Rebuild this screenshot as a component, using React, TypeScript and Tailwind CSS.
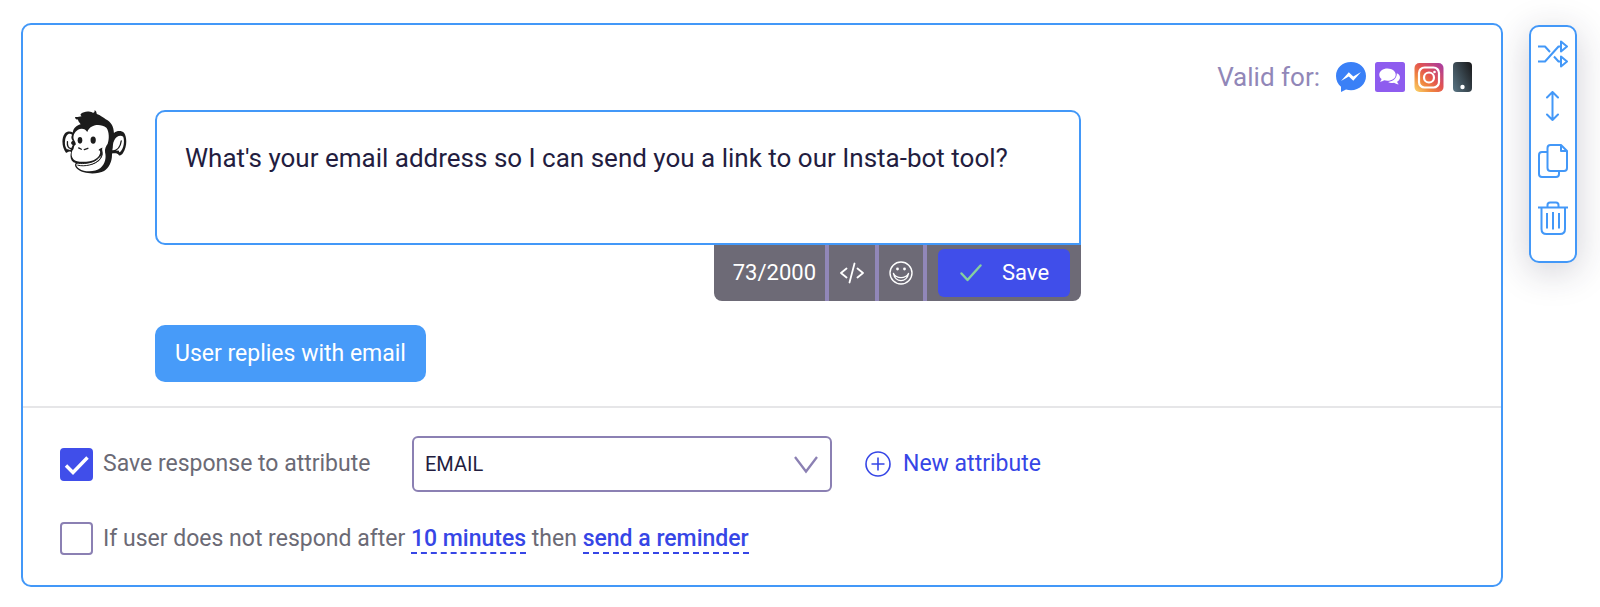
import React, { useState } from "react";

const Monkey = () => (
  <svg viewBox="36 30 196 194" className="w-[65px] h-16 shrink-0" aria-hidden="true">
    {/* Hair, head and ears */}
    <path
      fill="#1c1c1c"
      d="M75 51C82 53 88 49 95 49C91 47 91 43 93 41C102 36 112 31 129 38C133 39 135 36 134 31C139 32 140 37 141 42C152 46 160 52 168 58C184 66 192 78 193 100C203 92 216 92 224 100C233 114 233 142 220 161C216 166 212 169 208 167C204 160 196 160 187 162C188 186 178 205 163 215C142 226 100 225 82 209C75 203 73 196 77 191C64 187 58 176 63 157C55 153 52 159 48 160C36 147 32 116 44 101C51 93 62 94 68 98C70 85 79 77 92 73C89 68 84 65 84 59C78 59 75 56 75 51Z"
    />
    {/* Face */}
    <path
      fill="#fff"
      d="M112 97C107 86 93 84 84 90C73 97 67 110 72 121C75 127 78 131 77 135C69 138 74 146 67 153C63 162 64 173 70 179C78 188 100 189 120 185C136 182 148 173 151 160C152 155 150 151 146 152C148 147 155 147 158 144C155 151 160 157 159 165C155 182 140 193 120 197C106 200 90 198 81 193C77 195 79 202 88 208C104 219 135 219 152 206C167 193 170 173 166 158C165 147 168 141 174 132C179 119 179 95 170 84C158 74 139 74 128 79C119 83 115 89 112 97Z"
    />
    {/* Lips */}
    <path
      d="M82 197C104 203 137 196 151 178C154 174 155 170 155 163C146 182 128 190 104 192C95 193 86 192 81 191"
      fill="#fff"
      stroke="#1c1c1c"
      strokeWidth="3"
    />
    {/* Inner ears */}
    <path
      fill="#fff"
      d="M66 105C56 97 47 107 45 121C43 133 45 142 50 149C53 148 55 151 61 151C63 146 66 142 68 136C61 132 62 126 68 123C63 117 63 111 66 105Z"
    />
    <path d="M52 126C51 136 54 146 63 147" fill="none" stroke="#1c1c1c" strokeWidth="4" strokeLinecap="round" />
    <path
      fill="#fff"
      d="M221 111C213 103 198 111 194 122C188 132 191 143 188 152C195 153 199 155 205 153C209 151 207 157 211 158C223 147 226 124 221 111Z"
    />
    <path d="M215 124C213 139 204 152 190 155" fill="none" stroke="#1c1c1c" strokeWidth="4" strokeLinecap="round" />
    {/* Eyes and nose */}
    <ellipse cx="90" cy="122" rx="7" ry="10" fill="#1c1c1c" />
    <ellipse cx="130" cy="121" rx="8" ry="11" fill="#1c1c1c" />
    <path d="M86 145L94 149M103 150L114 146" stroke="#1c1c1c" strokeWidth="4" strokeLinecap="round" />
  </svg>
);

const MessengerIcon = () => (
  <svg viewBox="0 0 30 30" className="w-[30px] h-[30px]" role="img" aria-label="Messenger">
    <path fill="#3a80f7" d="M15 0C6.500 0 0 6 0 14c0 4.500 2 8.300 5 10.800V30l5-2.500c1.600.5 3.300.7 5 .7 8.500 0 15-6.200 15-14.200S23.500 0 15 0Z" />
    <path fill="#fff" d="M5 19l7.800-8.700 4.500 4.100L25 10l-7.700 8.700-4.500-4.100Z" />
  </svg>
);

const ChatIcon = () => (
  <svg viewBox="0 0 30 30" className="w-[30px] h-[30px]" role="img" aria-label="Web chat">
    <rect width="30" height="30" rx="2.500" fill="#8e5cef" />
    <path fill="#fff" d="M12.500 6.500c-4.600 0-8.200 2.700-8.200 6.200 0 1.800.9 3.300 2.300 4.400-.3 1.100-1 1.900-1.700 2.600 1.700 0 3.100-.6 4.300-1.400 1 .3 2.100.5 3.300.5 4.600 0 8.200-2.700 8.200-6.100s-3.600-6.200-8.200-6.200Z" />
    <path fill="#fff" d="M21.800 11.200c.2 4.700-3.600 8.200-8.600 8.700 1.300.9 3.500 1.400 5.800.9 1.200.9 2.700 1.500 4.800 1.500-.8-.8-1.400-1.600-1.700-2.600 3.700-2 4.100-6.600-.3-8.500Z" />
  </svg>
);

const InstagramIcon = () => (
  <svg viewBox="0 0 30 30" className="w-[30px] h-[30px]" role="img" aria-label="Instagram">
    <defs>
      <linearGradient id="insta" x1="0" y1="1" x2="1" y2="0">
        <stop offset="0" stopColor="#fbd96c" />
        <stop offset="0.300" stopColor="#f0883f" />
        <stop offset="0.550" stopColor="#e35450" />
        <stop offset="1" stopColor="#a33aa8" />
      </linearGradient>
    </defs>
    <rect x="0.500" y="1" width="29" height="29" rx="5" fill="url(#insta)" />
    <rect x="5" y="5.500" width="20" height="20" rx="5.500" fill="none" stroke="#fff" strokeWidth="2.200" />
    <circle cx="15" cy="15.500" r="5" fill="none" stroke="#fff" strokeWidth="2.200" />
    <circle cx="20.500" cy="10" r="1.300" fill="#fff" />
  </svg>
);

const PhoneIcon = () => (
  <svg viewBox="0 0 19 30" className="w-[19px] h-[30px]" role="img" aria-label="SMS">
    <defs>
      <linearGradient id="phone" x1="0" y1="0.800" x2="1" y2="0.100">
        <stop offset="0" stopColor="#546e7c" />
        <stop offset="1" stopColor="#1b1b1d" />
      </linearGradient>
    </defs>
    <rect width="19" height="30" rx="4" fill="url(#phone)" />
    <circle cx="9.500" cy="25" r="2.200" fill="#fff" />
  </svg>
);

const actions = [
  {
    label: "Shuffle",
    icon: (
      <svg viewBox="0 0 30 28" className="w-[30px] h-7" fill="none" stroke="currentColor" strokeWidth="2" strokeLinejoin="round">
        <path d="M0 6.500H7L12 12M0 21.500H7L20.500 6.500H23M16 16.500L20.500 21.500H23" />
        <path d="M23 1.500V11.500L29 6.500ZM23 16.500V26.500L29 21.500Z" />
      </svg>
    ),
  },
  {
    label: "Move",
    icon: (
      <svg viewBox="0 0 30 30" className="w-[30px] h-[30px]" fill="none" stroke="currentColor" strokeWidth="2" strokeLinecap="round" strokeLinejoin="round">
        <path d="M14.500 1V29M9 6.500L14.500 1L20 6.500M9 23.500L14.500 29L20 23.500" />
      </svg>
    ),
  },
  {
    label: "Copy",
    icon: (
      <svg viewBox="0 0 30 34" className="w-[30px] h-[34px]" fill="none" stroke="currentColor" strokeWidth="2" strokeLinejoin="round">
        <path d="M9.500 8H4Q1 8 1 11V30Q1 33 4 33H18Q21 33 21 30V27" />
        <path d="M12.500 1H23L29 7V24Q29 27 26 27H12.500Q9.500 27 9.500 24V4Q9.500 1 12.500 1ZM23 1V7H29" />
      </svg>
    ),
  },
  {
    label: "Delete",
    icon: (
      <svg viewBox="0 0 30 34" className="w-[30px] h-[34px]" fill="none" stroke="currentColor" strokeWidth="2" strokeLinejoin="round">
        <path d="M0 6.500H30M9.500 6.500V4Q9.500 1.500 12 1.500H18Q20.500 1.500 20.500 4V6.500" />
        <path d="M3.500 6.500V28Q3.500 33 8.500 33H22Q27 33 27 28V6.500M9 12V27.500M15 11V28.500M21 12V27.500" />
      </svg>
    ),
  },
];

export default function App() {
  const [message, setMessage] = useState("What's your email address so I can send you a link to our Insta-bot tool?");
  const [saveResponse, setSaveResponse] = useState(true);
  const [remind, setRemind] = useState(false);

  return (
    <div className="flex items-start gap-[26px] bg-white pl-[21px] pr-[23px] pt-[23px] pb-5 font-[Roboto,sans-serif] text-[22px] leading-7 text-[#6b6a75]">
      {/* Question card */}
      <div className="relative z-10 flex-1 min-w-0 bg-white border-2 border-[#4398f8] rounded-[10px]">
        <div className="pl-[39px] pr-[29px] pt-[37px] pb-6">
          <div className="flex items-center justify-end gap-[9px] mb-[18px]">
            <span className="mr-[7px] text-[26px] text-[#9187b8]">Valid for:</span>
            <MessengerIcon />
            <ChatIcon />
            <InstagramIcon />
            <PhoneIcon />
          </div>

          <div className="flex items-start gap-7">
            <Monkey />
            <div className="w-[926px]">
              <textarea
                aria-label="Message"
                value={message}
                onChange={(e) => setMessage(e.target.value)}
                className="block w-full h-[135px] px-7 py-[30px] resize-none outline-none border-2 border-[#4398f8] rounded-[10px] rounded-br-none text-[26px] leading-8 text-[#231d3f]"
              />
              <div className="flex w-fit ml-auto h-14 bg-[#6d6a76] rounded-b-lg text-white">
                <div className="flex items-center pl-[19px] pr-[9px]">73/2000</div>
                <button aria-label="Insert code" className="flex items-center justify-center w-[50px] border-l-4 border-[#9187b8]">
                  <svg viewBox="0 0 24 22" className="w-6 h-[22px]" fill="none" stroke="currentColor" strokeWidth="1.800" strokeLinecap="round" strokeLinejoin="round">
                    <path d="M6.500 6.500L1 11L6.500 15.500M17.500 6.500L23 11L17.500 15.500M14.500 1.500L9.500 20.500" />
                  </svg>
                </button>
                <button aria-label="Insert emoji" className="flex items-center justify-center w-[48px] border-l-4 border-[#9187b8]">
                  <svg viewBox="0 0 24 24" className="w-6 h-6" fill="none" stroke="currentColor" strokeWidth="1.400" strokeLinecap="round" strokeLinejoin="round">
                    <circle cx="12" cy="12" r="11" />
                    <path d="M4.500 12.500C6 22 18 22 19.500 12.500C16.500 18 7.500 18 4.500 12.500" />
                    <circle cx="8.500" cy="8" r="1.400" fill="currentColor" stroke="none" />
                    <circle cx="15.500" cy="8" r="1.400" fill="currentColor" stroke="none" />
                  </svg>
                </button>
                <div className="flex items-center border-l-4 border-[#9187b8] px-[11px]">
                  <button className="flex items-center gap-5 h-12 w-[132px] pl-[22px] rounded-md bg-[#404eea]">
                    <svg viewBox="0 0 22 18" className="w-[22px] h-[18px]" fill="none" stroke="#86cfa0" strokeWidth="2.400" strokeLinecap="round" strokeLinejoin="round">
                      <path d="M1.500 9.500L7.500 16L20.500 1.500" />
                    </svg>
                    Save
                  </button>
                </div>
              </div>
              <button className="mt-6 h-[57px] px-5 rounded-[10px] bg-[#479bf9] text-[23px] text-white">
                User replies with email
              </button>
            </div>
          </div>
        </div>

        {/* Response settings */}
        <div className="border-t-2 border-[#e6e6e8] px-[37px] pt-7 pb-[30px]">
          <div className="flex items-center">
            <label className="flex items-center gap-[10px] w-[352px] text-[23px]">
              <Checkbox checked={saveResponse} onChange={setSaveResponse} />
              Save response to attribute
            </label>
            <div className="relative w-[420px]">
              <select
                aria-label="Attribute"
                className="block w-full h-14 px-[11px] appearance-none bg-white border-2 border-[#8b80b3] rounded-md text-xl text-[#231d3f]"
              >
                <option>EMAIL</option>
              </select>
              <svg viewBox="0 0 24 18" className="absolute right-[14px] top-5 w-6 h-[18px] pointer-events-none" fill="none" stroke="#8b80b3" strokeWidth="2.300">
                <path d="M1 1L12 15.500L23 1" />
              </svg>
            </div>
            <button className="ml-[33px] flex items-center gap-3 text-[23px] text-[#3646e6]">
              <svg viewBox="0 0 26 26" className="w-[26px] h-[26px]" fill="none" stroke="currentColor" strokeWidth="1.600">
                <circle cx="13" cy="13" r="12" />
                <path d="M13 6.500V19.500M6.500 13H19.500" />
              </svg>
              New attribute
            </button>
          </div>

          <div className="flex items-center gap-[10px] mt-[30px] text-[23px]">
            <Checkbox id="remind" checked={remind} onChange={setRemind} />
            <p>
              <label htmlFor="remind">If user does not respond after</label>{" "}
              <a href="#delay" className="font-medium text-[#3646e6] border-b-2 border-dashed border-[#3646e6]">10 minutes</a>{" "}
              then{" "}
              <a href="#reminder" className="font-medium text-[#3646e6] border-b-2 border-dashed border-[#3646e6]">send a reminder</a>
            </p>
          </div>
        </div>
      </div>

      {/* Side actions */}
      <div className="mt-0.5 flex flex-col items-center w-12 pt-[13px] pb-[26px] bg-white border-2 border-[#4398f8] rounded-[10px] text-[#4398f8] shadow-[0_8px_36px_rgba(40,35,70,0.22)]">
        {actions.map((action) => (
          <button key={action.label} aria-label={action.label} className="mb-[23px] last:mb-0">
            {action.icon}
          </button>
        ))}
      </div>
    </div>
  );
}

function Checkbox({ id, checked, onChange }: { id?: string; checked: boolean; onChange: (v: boolean) => void }) {
  return (
    <span className="relative block w-[33px] h-[33px] shrink-0">
      <input
        id={id}
        type="checkbox"
        checked={checked}
        onChange={(e) => onChange(e.target.checked)}
        className="block w-full h-full appearance-none bg-white border-2 border-[#8b80b3] rounded-[4px] checked:bg-[#404eea] checked:border-[#404eea]"
      />
      {checked && (
        <svg viewBox="0 0 33 33" className="absolute inset-0 pointer-events-none" fill="none" stroke="#fff" strokeWidth="3.400">
          <path d="M6 17.500L13 24.500L27.500 9.500" />
        </svg>
      )}
    </span>
  );
}
